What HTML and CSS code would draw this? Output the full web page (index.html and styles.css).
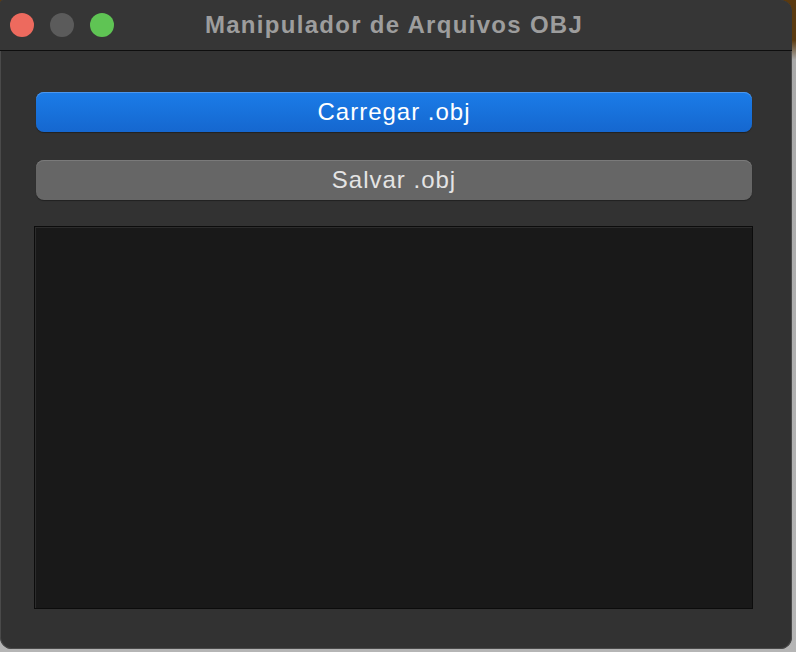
FILE: index.html
```html
<!DOCTYPE html>
<html lang="pt">
<head>
<meta charset="utf-8">
<title>Manipulador de Arquivos OBJ</title>
<link rel="stylesheet" href="styles.css">
</head>
<body>
<div class="desktop">
  <div class="window">
    <div class="titlebar">
      <div class="lights">
        <span class="light red"></span>
        <span class="light gray"></span>
        <span class="light green"></span>
      </div>
      <div class="title">Manipulador de Arquivos OBJ</div>
      <div></div>
    </div>
    <div class="content">
      <button class="btn btn-primary">Carregar .obj</button>
      <button class="btn btn-secondary">Salvar .obj</button>
      <div class="textarea"></div>
    </div>
  </div>
</div>
</body>
</html>
```
FILE: styles.css
```css
html, body {
  margin: 0;
  padding: 0;
}
body {
  width: 796px;
  height: 652px;
  background: linear-gradient(180deg, #5a3a10 0px, #5a3a10 40px, #a9a9a9 60px, #b5b5b5 100%);
  font-family: "Liberation Sans", Arial, sans-serif;
  overflow: hidden;
}
.desktop {
  width: 796px;
  height: 652px;
}
.window {
  width: 792px;
  height: 649px;
  background: #323232;
  border-radius: 4px 12px 12px 12px;
  box-shadow: inset 0 0 0 1px #4a4a4a;
  overflow: hidden;
  display: flex;
  flex-direction: column;
}
.titlebar {
  height: 50px;
  background: #363636;
  border-bottom: 1px solid #0e0e0e;
  display: grid;
  grid-template-columns: 1fr auto 1fr;
  align-items: center;
}
.lights {
  display: flex;
  gap: 16px;
  padding-left: 10px;
}
.light {
  width: 24px;
  height: 24px;
  border-radius: 50%;
  display: block;
}
.red { background: #ed6a5e; }
.gray { background: #5b5b5b; }
.green { background: #5fc454; }
.title {
  color: #9d9d9d;
  font-weight: bold;
  font-size: 24px;
  letter-spacing: 1.3px;
  padding-right: 4px;
}
.content {
  flex: 1;
  display: flex;
  flex-direction: column;
  padding: 41px 40px 0 36px;
}
.btn {
  height: 40px;
  border: none;
  border-radius: 8px;
  font-family: "Liberation Sans", Arial, sans-serif;
  font-size: 24px;
  letter-spacing: 1px;
  padding: 0;
  margin: 0;
  line-height: 40px;
}
.btn-primary {
  color: #ffffff;
  background: linear-gradient(180deg, #1b7ce8 0%, #1567cf 100%);
  box-shadow: inset 0 1px 0 #4c97ee, 0 1px 1px rgba(0,0,0,0.35);
}
.btn-secondary {
  margin-top: 28px;
  color: #e4e4e4;
  background: #666666;
  box-shadow: inset 0 1px 0 #7a7a7a, 0 1px 1px rgba(0,0,0,0.35);
}
.textarea {
  margin: 26px -1px 0 -2px;
  height: 381px;
  background: #191919;
  border: 1px solid #0c0c0c;
  box-shadow: inset 1px 1px 0 #2c2c2c;
}
```
